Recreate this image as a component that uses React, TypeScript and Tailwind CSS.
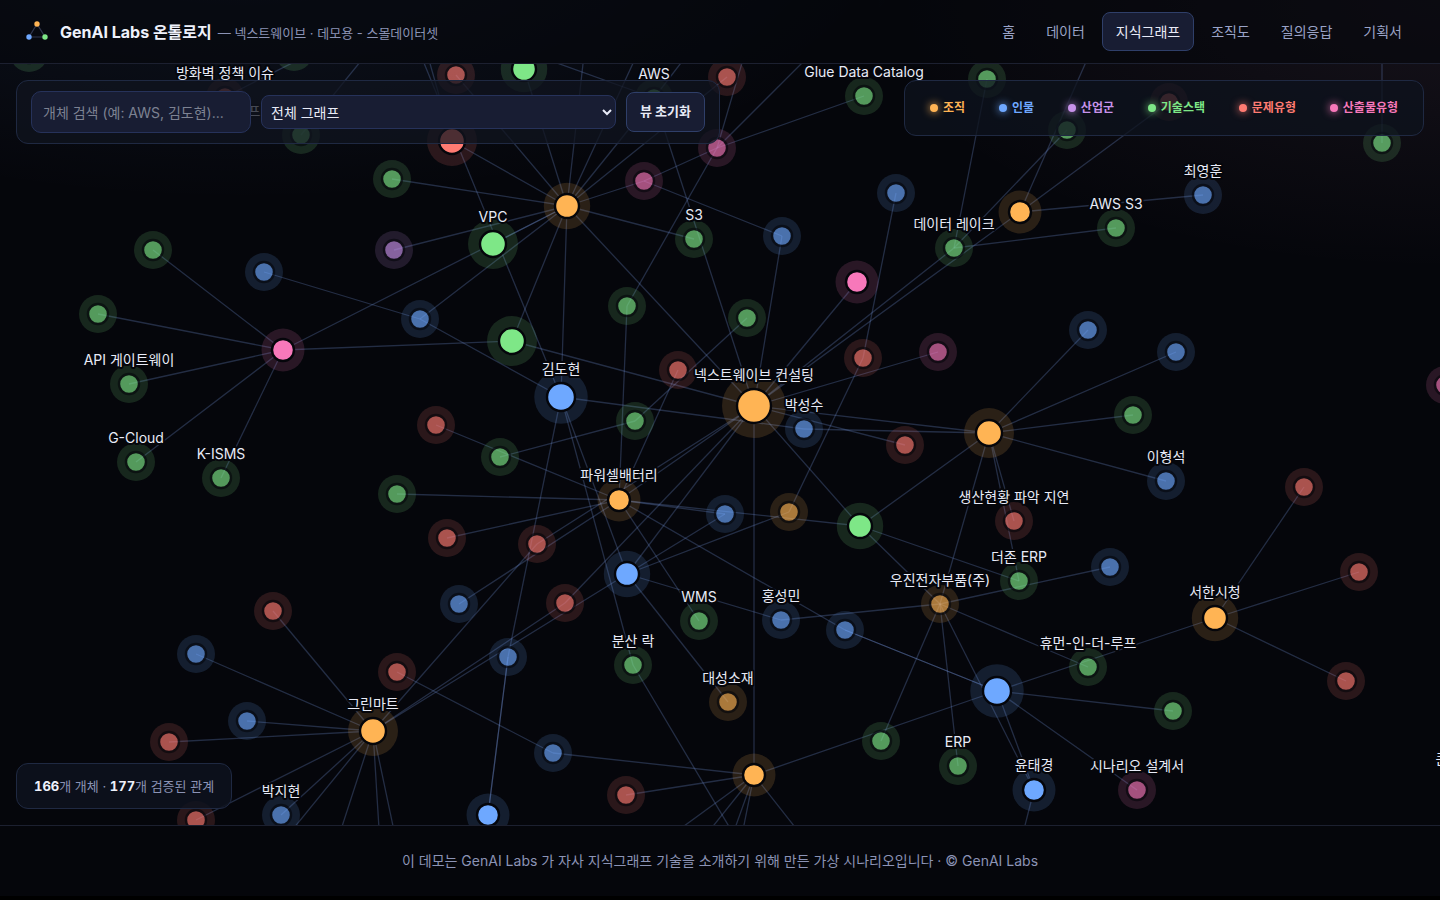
import * as React from "react";

type Kind = "org" | "person" | "industry" | "tech" | "issue" | "output";

interface GraphNode {
  x: number;
  y: number;
  kind: Kind;
  r?: number;
  label?: string;
}

const COLORS: Record<Kind, string> = {
  org: "#ffb454",
  person: "#6ea8ff",
  industry: "#c792ea",
  tech: "#7ee787",
  issue: "#ff7b72",
  output: "#f778ba",
};

const legend = [
  { name: "조직", text: "text-[#ffb454]", dot: "bg-[#ffb454] shadow-[0_0_8px_#ffb454]" },
  { name: "인물", text: "text-[#6ea8ff]", dot: "bg-[#6ea8ff] shadow-[0_0_8px_#6ea8ff]" },
  { name: "산업군", text: "text-[#c792ea]", dot: "bg-[#c792ea] shadow-[0_0_8px_#c792ea]" },
  { name: "기술스택", text: "text-[#7ee787]", dot: "bg-[#7ee787] shadow-[0_0_8px_#7ee787]" },
  { name: "문제유형", text: "text-[#ff7b72]", dot: "bg-[#ff7b72] shadow-[0_0_8px_#ff7b72]" },
  { name: "산출물유형", text: "text-[#f778ba]", dot: "bg-[#f778ba] shadow-[0_0_8px_#f778ba]" },
];

const navItems = ["홈", "데이터", "지식그래프", "조직도", "질의응답", "기획서"];

const nodes: GraphNode[] = [
  { x: 29, y: 53, kind: "tech" },
  { x: 294, y: 52, kind: "tech" },
  { x: 225, y: 97, kind: "issue", label: "방화벽 정책 이슈" },
  { x: 301, y: 135, kind: "tech", label: "프라이빗 서브넷팅" },
  { x: 654, y: 98, kind: "tech", label: "AWS" },
  { x: 456, y: 75, kind: "issue" },
  { x: 524, y: 69, kind: "tech", r: 12 },
  { x: 727, y: 77, kind: "issue" },
  { x: 864, y: 96, kind: "tech", label: "Glue Data Catalog" },
  { x: 987, y: 79, kind: "tech" },
  { x: 1067, y: 130, kind: "tech" },
  { x: 1169, y: 102, kind: "issue" },
  { x: 1382, y: 143, kind: "tech" },
  { x: 452, y: 141, kind: "issue", r: 13 },
  { x: 717, y: 148, kind: "output" },
  { x: 644, y: 181, kind: "output" },
  { x: 567, y: 206, kind: "org", r: 12 },
  { x: 392, y: 179, kind: "tech" },
  { x: 493, y: 244, kind: "tech", r: 13, label: "VPC" },
  { x: 394, y: 250, kind: "industry" },
  { x: 694, y: 239, kind: "tech", label: "S3" },
  { x: 782, y: 236, kind: "person" },
  { x: 896, y: 193, kind: "person" },
  { x: 1020, y: 212, kind: "org", r: 11 },
  { x: 954, y: 248, kind: "tech", label: "데이터 레이크" },
  { x: 1116, y: 228, kind: "tech", label: "AWS S3" },
  { x: 1203, y: 195, kind: "person", label: "최영훈" },
  { x: 153, y: 250, kind: "tech" },
  { x: 98, y: 314, kind: "tech" },
  { x: 264, y: 272, kind: "person" },
  { x: 420, y: 319, kind: "person" },
  { x: 512, y: 341, kind: "tech", r: 13 },
  { x: 283, y: 350, kind: "output", r: 11 },
  { x: 129, y: 384, kind: "tech", label: "API 게이트웨이" },
  { x: 136, y: 462, kind: "tech", label: "G-Cloud" },
  { x: 221, y: 478, kind: "tech", label: "K-ISMS" },
  { x: 627, y: 306, kind: "tech" },
  { x: 747, y: 318, kind: "tech" },
  { x: 857, y: 282, kind: "output", r: 11 },
  { x: 863, y: 358, kind: "issue" },
  { x: 938, y: 352, kind: "output" },
  { x: 561, y: 397, kind: "person", r: 14, label: "김도현" },
  { x: 678, y: 370, kind: "issue" },
  { x: 754, y: 406, kind: "org", r: 17, label: "넥스트웨이브 컨설팅" },
  { x: 804, y: 429, kind: "person", label: "박성수" },
  { x: 436, y: 425, kind: "issue" },
  { x: 635, y: 421, kind: "tech" },
  { x: 500, y: 457, kind: "tech" },
  { x: 397, y: 494, kind: "tech" },
  { x: 905, y: 445, kind: "issue" },
  { x: 989, y: 433, kind: "org", r: 13 },
  { x: 1088, y: 330, kind: "person" },
  { x: 1176, y: 352, kind: "person" },
  { x: 1133, y: 415, kind: "tech" },
  { x: 1166, y: 481, kind: "person", label: "이형석" },
  { x: 1445, y: 385, kind: "output" },
  { x: 1304, y: 487, kind: "issue" },
  { x: 619, y: 500, kind: "org", r: 11, label: "파워셀배터리" },
  { x: 447, y: 538, kind: "issue" },
  { x: 537, y: 544, kind: "issue" },
  { x: 725, y: 514, kind: "person" },
  { x: 789, y: 512, kind: "org" },
  { x: 860, y: 526, kind: "tech", r: 12 },
  { x: 1014, y: 521, kind: "issue", label: "생산현황 파악 지연" },
  { x: 1019, y: 581, kind: "tech", label: "더존 ERP" },
  { x: 1110, y: 567, kind: "person" },
  { x: 940, y: 604, kind: "org", label: "우진전자부품(주)" },
  { x: 627, y: 574, kind: "person", r: 12 },
  { x: 459, y: 604, kind: "person" },
  { x: 565, y: 603, kind: "issue" },
  { x: 699, y: 621, kind: "tech", label: "WMS" },
  { x: 781, y: 620, kind: "person", label: "홍성민" },
  { x: 845, y: 630, kind: "person" },
  { x: 1215, y: 618, kind: "org", r: 12, label: "서한시청" },
  { x: 1359, y: 572, kind: "issue" },
  { x: 1346, y: 681, kind: "issue" },
  { x: 633, y: 665, kind: "tech", label: "분산 락" },
  { x: 728, y: 702, kind: "org", label: "대성소재" },
  { x: 508, y: 657, kind: "person" },
  { x: 1088, y: 667, kind: "tech", label: "휴먼-인-더-루프" },
  { x: 997, y: 691, kind: "person", r: 14 },
  { x: 1173, y: 711, kind: "tech" },
  { x: 881, y: 741, kind: "tech" },
  { x: 958, y: 766, kind: "tech", label: "ERP" },
  { x: 1034, y: 790, kind: "person", r: 11, label: "윤태경" },
  { x: 1137, y: 790, kind: "output", label: "시나리오 설계서" },
  { x: 273, y: 611, kind: "issue" },
  { x: 196, y: 654, kind: "person" },
  { x: 397, y: 672, kind: "issue" },
  { x: 373, y: 731, kind: "org", r: 13, label: "그린마트" },
  { x: 247, y: 721, kind: "person" },
  { x: 169, y: 742, kind: "issue" },
  { x: 196, y: 820, kind: "issue" },
  { x: 281, y: 815, kind: "person", label: "박지현" },
  { x: 488, y: 815, kind: "person", r: 11 },
  { x: 553, y: 753, kind: "person" },
  { x: 626, y: 795, kind: "issue" },
  { x: 754, y: 775, kind: "org", r: 11 },
  { x: 1476, y: 783, kind: "output", label: "콘텐츠 전략서" },
];

// x1, y1, x2, y2
const edges: [number, number, number, number][] = [
  [567, 206, 392, 179],
  [567, 206, 394, 250],
  [567, 206, 493, 244],
  [567, 206, 283, 350],
  [567, 206, 420, 319],
  [567, 206, 512, 341],
  [567, 206, 561, 397],
  [567, 206, 754, 406],
  [567, 206, 694, 239],
  [567, 206, 644, 181],
  [567, 206, 452, 141],
  [567, 206, 456, 75],
  [567, 206, 524, 69],
  [567, 206, 585, 46],
  [567, 206, 641, 46],
  [567, 206, 654, 98],
  [567, 206, 727, 77],
  [654, 98, 521, 50],
  [654, 98, 694, 46],
  [654, 98, 754, 406],
  [561, 397, 417, 46],
  [452, 141, 425, 46],
  [301, 135, 373, 46],
  [225, 97, 310, 54],
  [717, 148, 747, 46],
  [717, 148, 819, 46],
  [717, 148, 864, 96],
  [717, 148, 644, 181],
  [717, 148, 627, 306],
  [644, 181, 782, 236],
  [627, 306, 619, 500],
  [782, 236, 754, 406],
  [896, 193, 863, 358],
  [863, 358, 789, 512],
  [857, 282, 754, 406],
  [938, 352, 754, 406],
  [954, 248, 987, 79],
  [954, 248, 1067, 130],
  [954, 248, 1116, 228],
  [954, 248, 754, 406],
  [1020, 212, 754, 406],
  [1020, 212, 1203, 195],
  [1020, 212, 1093, 46],
  [1020, 212, 1169, 102],
  [1382, 143, 1382, 46],
  [283, 350, 153, 250],
  [283, 350, 98, 314],
  [283, 350, 129, 384],
  [283, 350, 136, 462],
  [283, 350, 221, 478],
  [283, 350, 512, 341],
  [264, 272, 420, 319],
  [420, 319, 561, 397],
  [512, 341, 754, 406],
  [561, 397, 804, 429],
  [804, 429, 989, 433],
  [754, 406, 989, 433],
  [754, 406, 905, 445],
  [754, 406, 619, 500],
  [754, 406, 537, 544],
  [754, 406, 565, 603],
  [754, 406, 627, 574],
  [754, 406, 754, 775],
  [754, 406, 860, 526],
  [561, 397, 633, 665],
  [561, 397, 627, 574],
  [561, 397, 508, 657],
  [678, 370, 619, 500],
  [747, 318, 635, 421],
  [635, 421, 500, 457],
  [436, 425, 619, 500],
  [619, 500, 397, 494],
  [619, 500, 447, 538],
  [619, 500, 459, 604],
  [619, 500, 725, 514],
  [619, 500, 860, 526],
  [619, 500, 699, 621],
  [619, 500, 845, 630],
  [537, 544, 373, 731],
  [989, 433, 860, 526],
  [989, 433, 940, 604],
  [989, 433, 1014, 521],
  [989, 433, 1019, 581],
  [989, 433, 1088, 330],
  [989, 433, 1176, 352],
  [989, 433, 1133, 415],
  [989, 433, 1166, 481],
  [860, 526, 1019, 581],
  [860, 526, 940, 604],
  [627, 574, 725, 514],
  [627, 574, 789, 512],
  [627, 574, 781, 620],
  [627, 574, 728, 702],
  [627, 574, 373, 731],
  [565, 603, 373, 731],
  [781, 620, 940, 604],
  [940, 604, 1110, 567],
  [940, 604, 1088, 667],
  [940, 604, 881, 741],
  [940, 604, 958, 766],
  [940, 604, 1034, 790],
  [997, 691, 845, 630],
  [997, 691, 845, 630],
  [997, 691, 1034, 790],
  [997, 691, 1137, 790],
  [997, 691, 1173, 711],
  [997, 691, 1215, 618],
  [997, 691, 754, 775],
  [1215, 618, 1304, 487],
  [1215, 618, 1359, 572],
  [1215, 618, 1346, 681],
  [508, 657, 488, 815],
  [508, 657, 488, 815],
  [397, 672, 553, 753],
  [553, 753, 754, 775],
  [626, 795, 754, 775],
  [754, 775, 658, 845],
  [754, 775, 698, 845],
  [754, 775, 729, 845],
  [754, 775, 740, 845],
  [754, 775, 809, 845],
  [633, 665, 740, 845],
  [1034, 790, 1020, 845],
  [373, 731, 273, 611],
  [373, 731, 196, 654],
  [373, 731, 247, 721],
  [373, 731, 169, 742],
  [373, 731, 196, 820],
  [373, 731, 281, 815],
  [373, 731, 280, 845],
  [373, 731, 336, 845],
  [373, 731, 380, 845],
  [373, 731, 397, 845],
];

const Logo: React.FC = () => (
  <svg width="26" height="24" viewBox="0 0 26 24" aria-hidden="true">
    <path d="M13 4 L5 17 L21 17 Z" fill="none" stroke="#6e7ba8" strokeOpacity="0.4" strokeWidth="1.2" />
    <circle cx="13" cy="4" r="2.7" fill="#ffb454" />
    <circle cx="5" cy="17" r="2.7" fill="#6ea8ff" />
    <circle cx="21" cy="17" r="2.7" fill="#7ee787" />
  </svg>
);

const Header: React.FC = () => (
  <header className="flex h-16 items-center justify-between border-b border-[#1c2030] bg-[#05060b]/60 px-6">
    <a href="#" className="flex items-center gap-[10px]">
      <Logo />
      <span className="flex items-baseline gap-[6px]">
        <strong className="text-base font-bold text-[#eef1fb]">GenAI Labs 온톨로지</strong>
        <span className="text-[13px] text-[#8b93b5]">— 넥스트웨이브 · 데모용 - 스몰데이터셋</span>
      </span>
    </a>
    <nav className="flex gap-[3px]">
      {navItems.map((item) => (
        <a
          key={item}
          href="#"
          className={
            item === "지식그래프"
              ? "rounded-lg border border-[#2f3f69] bg-[#181d33] px-[13px] py-2 text-sm leading-[21px] text-[#e8ebf7]"
              : "rounded-lg border border-transparent px-[13px] py-2 text-sm leading-[21px] text-[#9aa3c7]"
          }
        >
          {item}
        </a>
      ))}
    </nav>
  </header>
);

const GraphCanvas: React.FC = () => (
  <svg
    className="absolute inset-0 h-full w-full"
    viewBox="0 64 1440 761"
    preserveAspectRatio="xMidYMid slice"
    role="img"
    aria-label="지식그래프"
  >
    <g stroke="#7896dc" strokeOpacity="0.27" strokeWidth="1.3">
      {edges.map(([x1, y1, x2, y2], i) => (
        <line key={i} x1={x1} y1={y1} x2={x2} y2={y2} />
      ))}
    </g>
    {nodes.map((node, i) => (
      <g key={i}>
        <circle cx={node.x} cy={node.y} r={node.r ? node.r * 1.75 + 2.25 : 19} fill={COLORS[node.kind]} opacity="0.15" />
        <circle
          cx={node.x}
          cy={node.y}
          r={node.r ?? 10}
          fill={COLORS[node.kind]}
          stroke="#05060b"
          strokeWidth="2.4"
          opacity={node.r ? 1 : 0.6}
        />
      </g>
    ))}
    <g
      fill="#e8ebf7"
      stroke="#05060b"
      strokeWidth="4"
      strokeLinejoin="round"
      textAnchor="middle"
      className="text-sm [paint-order:stroke]"
    >
      {nodes
        .filter((node) => node.label)
        .map((node) => (
          <text key={node.label} x={node.x} y={node.y - (node.r ?? 10) - 9}>
            {node.label}
          </text>
        ))}
    </g>
  </svg>
);

const Toolbar: React.FC = () => (
  <div className="flex w-[704px] items-center gap-[10px] rounded-xl border border-[#1f2942] bg-[#10141f]/75 px-[14px] py-[10px]">
    <input
      type="search"
      aria-label="개체 검색"
      placeholder="개체 검색 (예: AWS, 김도현)..."
      className="h-[42px] w-[220px] rounded-[10px] border border-[#26325a] bg-[#181d33] px-[11px] text-sm text-[#e8ebf7] placeholder:text-[#7d8292]"
    />
    <select
      aria-label="그래프 범위"
      className="h-[34px] min-w-0 flex-1 rounded-lg border border-[#26325a] bg-[#181d33] pr-1 pl-[5px] text-sm text-[#e8ebf7]"
    >
      <option>전체 그래프</option>
    </select>
    <button
      type="button"
      className="h-10 rounded-lg border border-[#2f3f69] bg-[#181d33] px-[13px] text-[13px] font-semibold text-[#e8ebf7]"
    >
      뷰 초기화
    </button>
  </div>
);

const Legend: React.FC = () => (
  <ul className="flex h-14 w-[520px] items-center justify-between rounded-xl border border-[#1f2942] bg-[#0e131e]/75 px-[25px]">
    {legend.map((item) => (
      <li key={item.name} className={`flex items-center gap-[5px] text-xs font-semibold ${item.text}`}>
        <span className={`size-2 rounded-full ${item.dot}`} />
        {item.name}
      </li>
    ))}
  </ul>
);

const App: React.FC = () => {
  return (
    <div className="min-h-screen bg-black font-['Inter','Noto_Sans_CJK_KR',sans-serif]">
      <div className="flex h-[calc(100vh-4px)] flex-col bg-[#05060b] bg-[radial-gradient(800px_320px_at_17%_-8%,#6ea8ff18,transparent_85%),radial-gradient(640px_300px_at_100%_0%,#e0a0d014,transparent_90%)]">
        <Header />
        <main className="relative min-h-0 flex-1 overflow-hidden">
          <GraphCanvas />
          <div className="absolute inset-x-4 top-4 flex items-start justify-between">
            <Toolbar />
            <Legend />
          </div>
          <p className="absolute bottom-4 left-4 rounded-xl border border-[#1f2942] bg-[#0e131e]/85 px-[17px] py-3 text-[13px] leading-5 text-[#8b93b5]">
            <b className="text-[#eef1fb] tabular-nums">166</b>개 개체 ·{" "}
            <b className="text-[#eef1fb] tabular-nums">177</b>개 검증된 관계
          </p>
        </main>
        <footer className="flex h-[71px] items-center justify-center border-t border-[#1c2030] text-sm text-[#8b93b5]">
          이 데모는 GenAI Labs 가 자사 지식그래프 기술을 소개하기 위해 만든 가상 시나리오입니다 · © GenAI Labs
        </footer>
      </div>
    </div>
  );
};

export default App;
